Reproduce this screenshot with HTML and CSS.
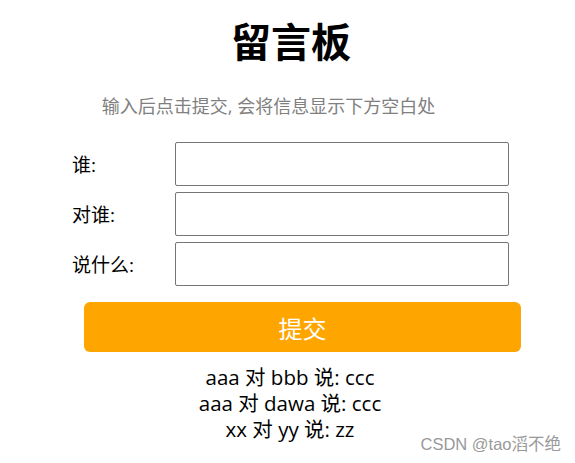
FILE: index.html
```html
<!DOCTYPE html>
<html>

<head>
    <title>留言板</title>
    <link rel="stylesheet" href="styles.css">
</head>

<body>
    <div class="container">
        <h1>留言板</h1>
        <p class="tip">输入后点击提交, 会将信息显示下方空白处</p>
        <div class="form">
            <div class="row">
                <span class="label">谁:</span>
                <input type="text" class="field">
            </div>
            <div class="row">
                <span class="label">对谁:</span>
                <input type="text" class="field">
            </div>
            <div class="row">
                <span class="label">说什么:</span>
                <input type="text" class="field">
            </div>
            <button class="submit">提交</button>
        </div>
        <div class="messages">
            <div>aaa 对 bbb 说: ccc</div>
            <div>aaa 对 dawa 说: ccc</div>
            <div>xx 对 yy 说: zz</div>
        </div>
    </div>
    <div class="mark">CSDN @tao滔不绝</div>
</body>

</html>
```

FILE: styles.css
```css
body {
    margin: 8px;
    font-family: "Open Sans", "Noto Sans CJK SC", sans-serif;
    color: #000;
}

.container {
    width: 559px;
}

h1 {
    margin: 10px 0 0;
    padding-left: 7px;
    font-size: 40px;
    line-height: 48px;
    font-weight: bold;
    text-align: center;
}

.tip {
    margin: 27px 0 0;
    padding-right: 38px;
    font-size: 18px;
    line-height: 26px;
    color: #808080;
    text-align: center;
}

.form {
    margin: 23px 0 0 64px;
}

.row {
    display: flex;
    align-items: center;
    margin-bottom: 6px;
}

.label {
    width: 103px;
    font-size: 19px;
}

.field {
    box-sizing: border-box;
    width: 334px;
    height: 44px;
    margin: 0;
    border: 1px solid #767676;
    border-radius: 2px;
}

.submit {
    display: block;
    width: 437px;
    height: 50px;
    margin: 16px 0 0 12px;
    border: none;
    border-radius: 6px;
    background-color: #ffa500;
    color: #fff;
    font-family: "Open Sans", "Noto Sans CJK SC", sans-serif;
    font-size: 24px;
    cursor: pointer;
}

.messages {
    margin-top: 12px;
    padding-left: 5px;
    font-size: 20.5px;
    line-height: 26px;
    text-align: center;
}

.mark {
    position: absolute;
    right: 14px;
    bottom: 8px;
    font-family: "Liberation Sans", "Noto Sans CJK SC", sans-serif;
    font-size: 16.5px;
    color: #999;
}
```
